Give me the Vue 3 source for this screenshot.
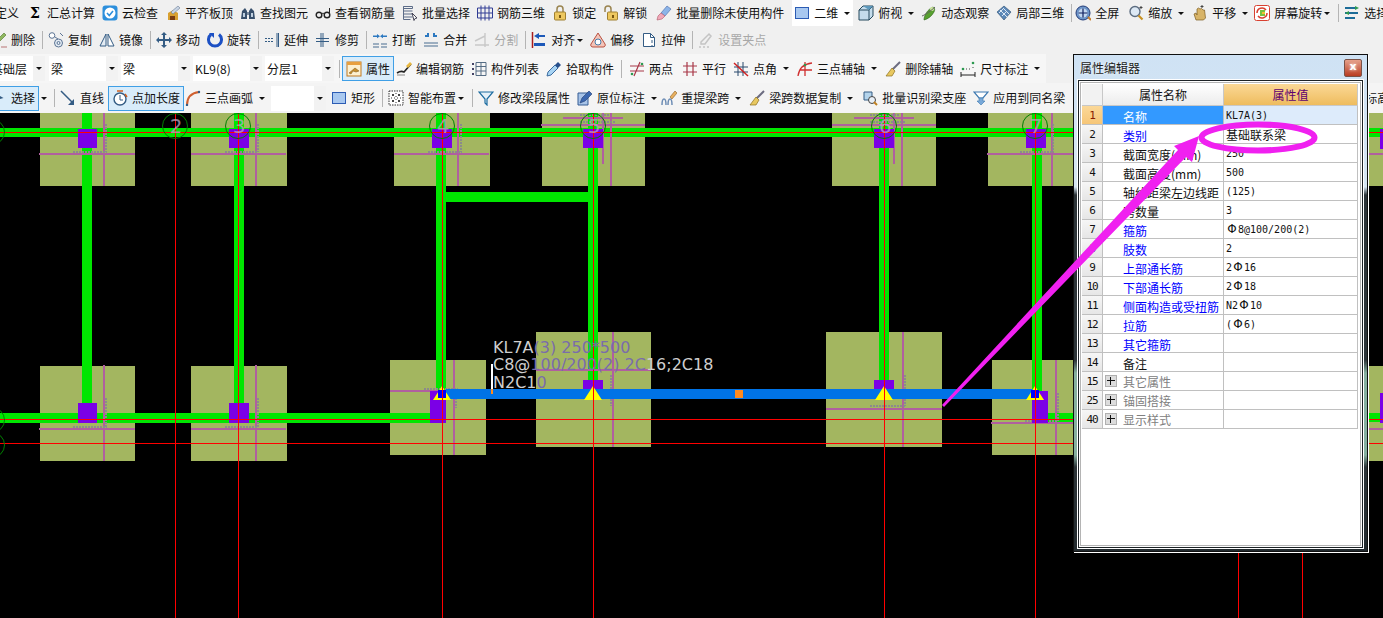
<script setup>
const icons = {
  sum: '<text x="8" y="13" font-size="14" font-weight="700" text-anchor="middle" font-family="DejaVu Serif">Σ</text>',
  cloud: '<rect x="0.5" y="0.5" width="15" height="15" rx="3" fill="#2c8fdc"/><circle cx="8" cy="8" r="5.5" fill="#fff"/><path d="M5 8l2.3 2.5L11 6" fill="none" stroke="#2c8fdc" stroke-width="1.6"/>',
  level: '<path d="M3 15V8l5-3 5 3v7z" fill="#d8a030"/><path d="M5 11h5v4H5z" fill="#7a3c10"/><path d="M6 7l7-6 2 2-7 6z" fill="#c8d4e4" stroke="#6a7c94" stroke-width=".6"/>',
  find: '<path d="M1 14l1-8 3-3 2 3v8zM9 14V6l2-3 3 3 1 8z" fill="#38506c"/><path d="M3 8h2v4H3zM11 8h2v4h-2z" fill="#c0d0e0"/><path d="M7 7h2v3H7z" fill="#7c8ca0"/>',
  glass: '<circle cx="4" cy="10" r="2.8" fill="none" stroke="#222" stroke-width="1.4"/><circle cx="12" cy="10" r="2.8" fill="none" stroke="#222" stroke-width="1.4"/><path d="M6.5 9C7.5 8 8.5 8 9.5 9M14.500 9V3" fill="none" stroke="#222"/>',
  batch: '<path d="M1.500 1.500h9v2h-9zM1.500 6h9M1.500 9h9M1.500 12h9M1.500 1.500v13h7" fill="none" stroke="#5c6c88"/><path d="M10 8l5 5-2 .5-1 2z" fill="#fff" stroke="#445"/>',
  steel: '<path d="M.5 3h15v10H.5zM4 .5v15M8 .5v15M12 .5v15M.5 8h15" fill="none" stroke="#303c94"/>',
  lock: '<path d="M5 7V4a3 3 0 016 0v3" fill="none" stroke="#9a8450" stroke-width="1.500"/><rect x="2.500" y="7" width="11" height="8" rx="1" fill="#eec860" stroke="#a08030"/><path d="M7 10h2v3H7z" fill="#7a5810"/>',
  unlock: '<path d="M2 7V4a3 3 0 016 0v3" fill="none" stroke="#9a8450" stroke-width="1.500"/><rect x="4.500" y="7" width="10" height="8" rx="1" fill="#eec860" stroke="#a08030"/><path d="M9 10h2v3H9z" fill="#7a5810"/>',
  erase: '<path d="M11 1l4 3-6 7-4-3z" fill="#8cb4e8" stroke="#4468a8" stroke-width=".6"/><path d="M5 8l4 3-3 3-5 1 1-4z" fill="#f0a8b8" stroke="#b05868" stroke-width=".6"/>',
  two: '<rect x="1.500" y="2.500" width="13" height="11" fill="#a8c8f0" stroke="#2c5cb4"/>',
  box3d: '<path d="M1 5l4-4h10v10l-4 4H1z" fill="#c4dcec" stroke="#24485c"/><path d="M1 5h10v10M11 5l4-4" fill="none" stroke="#24485c"/><path d="M5 1l6 4 4-4z" fill="#5c98bc"/>',
  orbit: '<path d="M3 15c0-5 4-11 9-13 2 1 2 3 1 5-2 4-6 7-10 8z" fill="#58a030" stroke="#2c6418" stroke-width=".6"/><circle cx="11" cy="4" r="2" fill="#d0e8a0"/><path d="M1 11c3-1 10-6 13-9" fill="none" stroke="#606060"/>',
  local: '<path d="M8 1l7 6-7 8-7-8z" fill="#5c88b8" stroke="#24486c" stroke-width=".6"/><path d="M4 5l7 7M7 3l6 6M3 8l5-5M6 11l5-5" stroke="#dce8f4" fill="none"/>',
  full: '<circle cx="8" cy="8" r="7" fill="#6c94c8" stroke="#243c78"/><circle cx="8" cy="8" r="4.500" fill="#c4d8f0"/><path d="M8 3.500v9M3.500 8h9" stroke="#102060" stroke-width="1.200"/><path d="M13 12l3 3" stroke="#c88030" stroke-width="2"/>',
  zoom: '<circle cx="7" cy="6.500" r="5" fill="#dce8f4" stroke="#5c6c80" stroke-width="1.400"/><path d="M10.500 10.500l4 4" stroke="#c89020" stroke-width="2.200"/><path d="M13 1v3M11.500 2.500h3" stroke="#444"/>',
  hand: '<path d="M4 15l-2-6 2-1 1 2V4l1.500-1L8 4l1.500-.5L11 5l1.500 0 1 8-2 2z" fill="#d8b468" stroke="#7c5c20" stroke-width=".7"/><path d="M10 0v3M8.500 1.500h3" stroke="#444"/>',
  rot: '<rect x=".5" y=".5" width="15" height="15" rx="2" fill="#fff" stroke="#d84030"/><path d="M3 8a5 5 0 019-3M13 8a5 5 0 01-9 3" fill="none" stroke="#d84030" stroke-width="1.500"/><rect x="6" y="5" width="5" height="6" fill="#78c040"/><rect x="8" y="7" width="3" height="2" fill="#f0c030"/>',
  pick: '<path d="M1 3h10M1 8h13M1 13h10" stroke="#1c6c98" stroke-width="2"/><path d="M11 1l4 2-4 2zM5 6l-4 2 4 2z" fill="#2c9a50"/>',
  del: '<path d="M13 1l2 2-7 7-2-2z" fill="#8fb860" stroke="#4c7424" stroke-width=".6"/><path d="M6 8l2 2-3 4-3 1 1-3zM10 15h6" fill="#e0a0a0" stroke="#a04040" stroke-width=".7"/>',
  copy: '<circle cx="4" cy="3.500" r="2.800" fill="#fff" stroke="#5c7494"/><circle cx="10.500" cy="11" r="4" fill="#e4ecf4" stroke="#5c7494"/><path d="M7 5l3 2M12 1l3 3" stroke="#5c7494"/><circle cx="10.500" cy="11" r="1.500" fill="none" stroke="#5c7494"/>',
  mirror: '<path d="M7 2L1 14h6z" fill="#e4ecf4" stroke="#345c84"/><path d="M9 2l6 12H9z" fill="#fff" stroke="#345c84"/>',
  move: '<path d="M8 0l3 3H9v4h4V5l3 3-3 3v-2H9v4h2l-3 3-3-3h2V9H3v2L0 8l3-3v2h4V3H5z" fill="#345c84"/>',
  rotate: '<path d="M4 2.500A6.500 6.500 0 1012 2.500" fill="none" stroke="#1c50c4" stroke-width="3"/><path d="M2 1h5v5z" fill="#1c50c4"/>',
  extend: '<path d="M1 6.500h8M1 9.500h8" stroke="#345c84" stroke-dasharray="2 1"/><path d="M13 1v14M14.500 1v14" stroke="#345c84"/>',
  trim: '<path d="M1 6.500h13M1 9.500h13" stroke="#345c84"/><path d="M6 1v14M8 1v14" stroke="#345c84"/>',
  brk: '<path d="M1 12h6M9 12h6M1 15h6M9 15h6" stroke="#486c90" stroke-width="1.200"/><path d="M1 5h4V3l3 3-3 3V7H1zM15 5h-4V3L8 6l3 3V7h4z" fill="#2c78c0" transform="scale(1 .7)"/>',
  merge: '<path d="M1 11h14M1 14h14" stroke="#486c90" stroke-width="1.200"/><path d="M5 1v3H2M11 1v3h3" stroke="#2c78c0" stroke-width="2" fill="none"/>',
  split: '<path d="M1 13h14M1 9l10-5M11 1v14" stroke="#c8c8c8" stroke-width="1.400" fill="none"/>',
  align: '<path d="M1.500 0v16" stroke="#a81c1c" stroke-width="1.500"/><path d="M3 4l5-3v2h6v2H8v2zM3 11h11v3H3z" fill="#1c58b8"/>',
  offset: '<path d="M8 1l7 11a2 2 0 01-2 3H3a2 2 0 01-2-3z" fill="#f4c4b8" stroke="#b85040"/><circle cx="8" cy="10" r="3" fill="#fff" stroke="#487ca8"/>',
  stretch: '<path d="M2.500 1.500h7l4 4v9h-11z" fill="#fff" stroke="#345c84"/><path d="M9.500 1.500v4h4M11 8v3M11 13v1" fill="none" stroke="#345c84"/>',
  grip: '<path d="M1 15h2M5 15h2M9 15h2M3 10l8-8 2 2-6 8-4 0z" fill="none" stroke="#c4c4c4" stroke-width="1.500"/>',
  prop: '<rect x="1" y="1" width="14" height="14" fill="#fdf0d0" stroke="#c07820"/><path d="M1 1h14v3H1z" fill="#e8a040"/><path d="M3 12l6-5 4 3-3 1-3-1-2 3z" fill="#c89030" stroke="#785010" stroke-width=".5"/>',
  editbar: '<path d="M1 12c3-2 5-2 7-1l7-8" fill="none" stroke="#222" stroke-width="1.600"/><path d="M10 5l4-4 2 2-4 4z" fill="#e8b840"/><path d="M1 14h8" stroke="#888"/>',
  list: '<path d="M1 2h2v2H1zM1 7h2v2H1zM1 12h2v2H1z" fill="#446"/><path d="M5 1.500h10v13H5zM5 5.500h10M5 10h10M10 1.500v13" fill="none" stroke="#556c84"/>',
  dropper: '<path d="M1 15l1-4 7-7 3 3-7 7z" fill="#a8d4f4" stroke="#3c6ca0"/><path d="M9 4l3-3 3 3-3 3z" fill="#28508c"/>',
  twopt: '<path d="M11 1L5 15M1 5h14M1 10h14" stroke="#a83848" fill="none" stroke-width="1.200"/><circle cx="3" cy="13" r="1.300" fill="#2c9a50"/><circle cx="13" cy="3" r="1.300" fill="#2c9a50"/>',
  para: '<path d="M5 1v14M11 1v14M1 5h14M1 11h14" stroke="#a83848" fill="none" stroke-width="1.200"/>',
  angle: '<path d="M5 1v14M10 1v14M1 6h14M1 11h14" stroke="#28486c" fill="none"/><path d="M1 2l14 13" stroke="#d02020" stroke-width="1.500"/>',
  arc3: '<path d="M1 15C2 7 6 3 15 2M8 1v14M3 9h12" fill="none" stroke="#d03030" stroke-width="1.300"/><circle cx="8" cy="4" r="1.300" fill="#2c9a50"/>',
  broom: '<path d="M15 1L7 9" stroke="#6c6c80" stroke-width="2"/><path d="M7 7l3 3-3 5-6 0z" fill="#e8c860" stroke="#8c7020" stroke-width=".7"/>',
  dim: '<path d="M1 14h14M1 11v5M15 11v5" stroke="#222" fill="none"/><circle cx="3" cy="8" r="1.300" fill="#2c9a50"/><circle cx="13" cy="2" r="1.300" fill="#2c9a50"/><path d="M6 8h1M9 8h1M13 6v1" stroke="#444"/>',
  sel: '<path d="M2 2l5 11 1.500-4 4-1z" fill="#345c84"/>',
  linei: '<path d="M1 1l12 12" stroke="#345c84" stroke-width="1.500"/><path d="M14 15H8l6-6z" fill="#345c84"/>',
  ptlen: '<circle cx="8" cy="9" r="6" fill="#fff" stroke="#345c84" stroke-width="1.400"/><path d="M8 5v5h3" stroke="#345c84" fill="none"/><path d="M5 1h6M13 4l2 3" stroke="#d06020" stroke-width="1.500"/>',
  arc: '<path d="M2 15C2 8 6 3 14 2" fill="none" stroke="#d06030" stroke-width="2"/><circle cx="2" cy="15" r="1.200" fill="#345c84"/><circle cx="14" cy="2" r="1.200" fill="#345c84"/>',
  smart: '<rect x="1" y="1" width="14" height="14" fill="#fff" stroke="#333" stroke-dasharray="1.500 1"/><path d="M8 3v10M3 8h10" stroke="#333" stroke-dasharray="1 2"/><path d="M4 4h2v2H4zM10 4h2v2h-2zM4 10h2v2H4zM10 10h2v2h-2z" fill="#444"/>',
  segp: '<path d="M1 2h14L9 9v6L7 13V9z" fill="#e4f0f8" stroke="#1c6ca0" stroke-width="1.200"/>',
  inplace: '<path d="M1 3h10v12H1z" fill="#a8c4e8" stroke="#345c94"/><path d="M3 13l2-5 7-7 3 3-7 7z" fill="#3c68b0" stroke="#203c70" stroke-width=".6"/>',
  respan: '<path d="M1 15c0-8 4-8 4 0M7 15c0-8 4-8 4 0" fill="none" stroke="#6c8cb4" stroke-width="1.500"/><path d="M9 7l5-6 2 2-5 6z" fill="#e8b060" stroke="#8c6020" stroke-width=".6"/>',
  recog: '<path d="M2 2h8v8H2z" fill="#b4d4ec" stroke="#345c84"/><circle cx="10" cy="10" r="3.500" fill="#e8f0f8" stroke="#444"/><path d="M12 12l3 3" stroke="#c08020" stroke-width="2"/>',
  apply: '<path d="M1 2h14l-5 6h-4z" fill="#fff" stroke="#3c78b0" stroke-width="1.200"/><path d="M6 8h4v3h2l-4 4-4-4h2z" fill="#78a8d8" stroke="#3c78b0" stroke-width=".6"/>',
}

const toolbar = [
  { name: 'r1', items: [
    { t: '定义', g: -5 - 7 }, { i: 'sum', t: '汇总计算', g: 1 },
    { i: 'cloud', t: '云检查' }, { i: 'level', t: '平齐板顶' }, { i: 'find', t: '查找图元' },
    { i: 'glass', t: '查看钢筋量' }, { i: 'batch', t: '批量选择' }, { i: 'steel', t: '钢筋三维' },
    { i: 'lock', t: '锁定' }, { i: 'unlock', t: '解锁' }, { i: 'erase', t: '批量删除未使用构件', g: 2 },
    { i: 'two', t: '二维', a: 1, g: 1, white: 1 }, { i: 'box3d', t: '俯视', a: 1, g: -2 },
    { i: 'orbit', t: '动态观察', g: -1 }, { i: 'local', t: '局部三维' }, { s: 1 },
    { i: 'full', t: '全屏', g: -2 }, { i: 'zoom', t: '缩放', a: 1, g: 2 }, { i: 'hand', t: '平移', a: 1 },
    { i: 'rot', t: '屏幕旋转', a: 2, g: -2 }, { s: 1 }, { i: 'pick', t: '选择' },
  ] },
  { name: 'r2', items: [
    { i: 'del', t: '删除', g: -16 }, { s: 1 }, { i: 'copy', t: '复制' }, { i: 'mirror', t: '镜像' }, { s: 1 },
    { i: 'move', t: '移动' }, { i: 'rotate', t: '旋转' }, { s: 1 }, { i: 'extend', t: '延伸' }, { i: 'trim', t: '修剪' }, { s: 1 },
    { i: 'brk', t: '打断' }, { i: 'merge', t: '合并' }, { i: 'split', t: '分割', d: 1 }, { s: 1 },
    { i: 'align', t: '对齐', a: 2 }, { i: 'offset', t: '偏移', g: -1 }, { i: 'stretch', t: '拉伸' }, { s: 1 },
    { i: 'grip', t: '设置夹点', d: 1 },
  ] },
  { name: 'r3', items: [
    { c: '基础层', w: 56, g: -18 }, { c: '梁', w: 69, g: -3 }, { c: '梁', w: 69, g: -4 },
    { c: 'KL9(8)', w: 69, g: -4 }, { c: '分层1', w: 69, g: -4 }, { s: 1, g: -2 },
    { i: 'prop', t: '属性', on: 1, g: -3 }, { i: 'editbar', t: '编辑钢筋', g: -5 }, { i: 'list', t: '构件列表' },
    { i: 'dropper', t: '拾取构件' }, { s: 1 }, { i: 'twopt', t: '两点', g: 2 }, { i: 'para', t: '平行', g: 2 },
    { i: 'angle', t: '点角', a: 1 }, { i: 'arc3', t: '三点辅轴', a: 1 }, { i: 'broom', t: '删除辅轴' },
    { i: 'dim', t: '尺寸标注', a: 1 },
  ] },
  { name: 'r4', items: [
    { i: 'sel', t: '选择', on: 1, a: 2, g: -20 }, { s: 1, g: -1 }, { i: 'linei', t: '直线' },
    { i: 'ptlen', t: '点加长度', on: 1, g: -3 }, { i: 'arc', t: '三点画弧', a: 1, g: -6 },
    { c: '', w: 55, g: -2 }, { i: 'two', t: '矩形', g: -2 }, { s: 1 }, { i: 'smart', t: '智能布置', a: 2 }, { s: 1 },
    { i: 'segp', t: '修改梁段属性' }, { i: 'inplace', t: '原位标注', a: 1 }, { i: 'respan', t: '重提梁跨', a: 1, g: -4 },
    { i: 'broom', t: '梁跨数据复制', a: 1 }, { i: 'recog', t: '批量识别梁支座', g: 1 }, { i: 'apply', t: '应用到同名梁' },
    { t: '标高', g: 293 },
  ] },
]

const pads = [
  [40, 113, 95, 73], [191, 113, 96, 73], [394, 113, 96, 73], [542, 113, 103, 73], [832, 113, 104, 73], [988, 113, 92, 73], [1368, 113, 15, 73],
  [40, 366, 95, 95], [191, 366, 96, 95], [390, 360, 96, 95], [536, 332, 115, 115], [826, 332, 116, 115], [992, 360, 88, 95], [1369, 366, 14, 95],
]
const green = [
  [0, 128, 1383, 9], [82, 113, 10, 310], [234, 113, 10, 310], [436, 113, 10, 280], [588, 113, 10, 275], [879, 113, 10, 275], [1032, 113, 10, 280],
  [446, 192, 142, 10], [0, 413, 432, 10], [1046, 413, 337, 9],
]
const purple = [
  [78, 129, 19, 19], [229, 129, 20, 19], [432, 129, 20, 19], [583, 129, 20, 19], [874, 129, 20, 19], [1026, 129, 20, 19],
  [78, 403, 19, 20], [229, 403, 20, 20], [430, 391, 16, 32], [583, 380, 20, 10], [874, 380, 20, 10], [1032, 391, 16, 32],
  [1380, 129, 3, 20], [1380, 393, 3, 30],
]
// x1 y1 x2 y2
const mauve = [
  [104, 113, 104, 186], [39, 154, 135, 154], [256, 113, 256, 186], [191, 154, 286, 154], [458, 113, 458, 186], [394, 154, 489, 154],
  [611, 113, 611, 186], [603, 113, 603, 164], [541, 125, 645, 125], [563, 118, 623, 118],
  [902, 113, 902, 186], [894, 113, 894, 164], [832, 125, 936, 125], [854, 118, 914, 118], [1052, 113, 1052, 186], [987, 154, 1075, 154],
  [104, 365, 104, 461], [39, 429, 135, 429], [256, 365, 256, 461], [191, 429, 286, 429], [454, 360, 454, 455], [390, 391, 485, 391],
  [613, 332, 613, 447], [536, 370, 651, 370], [903, 332, 903, 447], [826, 409, 942, 409], [1056, 360, 1056, 455], [991, 423, 1080, 423],
  [1368, 154, 1383, 154], [1368, 429, 1383, 429],
]
// tiny unreadable labels beside the mauve lines
const smudges = [
  [73, 152, 107, 152], [106, 124, 106, 152], [225, 152, 258, 152], [258, 124, 258, 152], [428, 152, 462, 152], [461, 124, 461, 152],
  [73, 427, 107, 427], [106, 398, 106, 427], [225, 427, 258, 427], [258, 398, 258, 427], [424, 389, 458, 389], [456, 392, 456, 408],
  [611, 375, 611, 406], [870, 406, 905, 406], [905, 375, 905, 406], [1025, 421, 1058, 421], [1058, 393, 1058, 421], [1020, 152, 1054, 152], [1053, 124, 1053, 152],
  [580, 115, 610, 115], [580, 122, 615, 122], [870, 115, 900, 115], [870, 122, 905, 122],
]
const redV = [175, 238, 442, 593, 884, 1035, 1238, 1302]
const axes = [[175, 126, '2'], [238, 126, '3'], [442, 126, '4'], [593, 126, '5'], [884, 126, '6'], [1035, 126, '7']]
const triangles = [[593, false], [884, false], [442, true], [1035, true]]

const rows = [
  { n: 1, name: '名称', v: 'KL7A(3)', sel: true },
  { n: 2, name: '类别', v: '基础联系梁', blue: true },
  { n: 3, name: '截面宽度(mm)', v: '250' },
  { n: 4, name: '截面高度(mm)', v: '500' },
  { n: 5, name: '轴线距梁左边线距', v: '(125)' },
  { n: 6, name: '跨数量', v: '3' },
  { n: 7, name: '箍筋', v: 'Φ8@100/200(2)', blue: true },
  { n: 8, name: '肢数', v: '2', blue: true },
  { n: 9, name: '上部通长筋', v: '2Φ16', blue: true },
  { n: 10, name: '下部通长筋', v: '2Φ18', blue: true },
  { n: 11, name: '侧面构造或受扭筋', v: 'N2Φ10', blue: true },
  { n: 12, name: '拉筋', v: '(Φ6)', blue: true },
  { n: 13, name: '其它箍筋', v: '', blue: true },
  { n: 14, name: '备注', v: '' },
  { n: 15, name: '其它属性', v: '', group: true },
  { n: 25, name: '锚固搭接', v: '', group: true },
  { n: 40, name: '显示样式', v: '', group: true },
]
</script>

<template>
  <div class="page">
    <div class="toolbar">
      <div v-for="row in toolbar" :key="row.name" class="row" :class="row.name">
        <template v-for="(it, idx) in row.items" :key="idx">
          <span v-if="it.s" class="sep" :style="{ marginLeft: 7 + (it.g || 0) + 'px' }"></span>
          <span v-else-if="it.c !== undefined" class="combo" :style="{ width: it.w + 'px', marginLeft: 7 + (it.g || 0) + 'px' }">
            <span class="combo-text">{{ it.c }}</span><span class="combo-arrow"></span>
          </span>
          <span v-else class="item" :class="{ on: it.on, white: it.white, off: it.d }" :style="{ marginLeft: 7 + (it.g || 0) + 'px' }">
            <svg v-if="it.i" class="ico" viewBox="0 0 16 16" v-html="icons[it.i]"></svg>
            <span class="label">{{ it.t }}</span>
            <span v-if="it.a && it.white" class="arrow"></span>
          </span>
          <span v-if="it.a && !it.white" class="arrow" :class="{ tight: it.a === 2 }"></span>
        </template>
      </div>
    </div>

    <svg class="canvas" viewBox="0 113 1383 505" width="1383" height="505">
      <rect v-for="(p, i) in pads" :key="'p' + i" :x="p[0]" :y="p[1]" :width="p[2]" :height="p[3]" fill="#a3b660" />
      <rect v-for="(g, i) in green" :key="'g' + i" :x="g[0]" :y="g[1]" :width="g[2]" :height="g[3]" fill="#00e600" />
      <line v-for="(m, i) in mauve" :key="'m' + i" :x1="m[0]" :y1="m[1]" :x2="m[2]" :y2="m[3]" stroke="#b05f9f" stroke-width="2" />
      <line v-for="(m, i) in smudges" :key="'s' + i" :x1="m[0]" :y1="m[1]" :x2="m[2]" :y2="m[3]" stroke="#8b8b8b" stroke-width="2" stroke-dasharray="2 1" />
      <rect v-for="(p, i) in purple" :key="'v' + i" :x="p[0]" :y="p[1]" :width="p[2]" :height="p[3]" fill="#7b00e6" />
      <rect x="446" y="389" width="588" height="10" fill="#0073e6" />
      <rect x="735" y="390" width="8" height="8" fill="#ff8a1e" />
      <g v-for="t in triangles" :key="t[0]">
        <polygon :points="`${t[0]},386 ${t[0] + 9},400 ${t[0] - 9},400`" fill="#ffff00" />
        <rect v-if="t[1]" :x="t[0] - 4" y="390" width="8" height="8" fill="#0000ff" />
      </g>
      <line v-for="x in redV" :key="x" :x1="x + 0.5" y1="113" :x2="x + 0.5" y2="618" stroke="#ff0000" />
      <line x1="0" y1="132.500" x2="1383" y2="132.500" stroke="#ff0000" />
      <line x1="0" y1="419.500" x2="1383" y2="419.500" stroke="#ff0000" />
      <line x1="0" y1="443.500" x2="1383" y2="443.500" stroke="#ff0000" />
      <g v-for="a in axes" :key="a[2]">
        <circle :cx="a[0]" :cy="a[1]" r="12.500" fill="none" stroke="#008000" />
        <text :x="a[0] + 1" :y="a[1] + 7" class="axis-no" text-anchor="middle">{{ a[2] }}</text>
      </g>
      <circle cx="-8" cy="132" r="12.500" fill="none" stroke="#008000" />
      <circle cx="-8" cy="420" r="12.500" fill="none" stroke="#008000" />
      <circle cx="-8" cy="445" r="12.500" fill="none" stroke="#008000" />
      <text class="beam-text" x="493" y="353">KL7A<tspan class="dim">(3) 250*500</tspan></text>
      <text class="beam-text" x="493" y="370">C8@<tspan class="dim">100/200(2) 2C</tspan>16;2C18</text>
      <text class="beam-text" x="493" y="388">N2C1<tspan class="dim">0</tspan></text>
      <rect x="491" y="364" width="2" height="25" fill="#fff" />
      <rect x="491" y="389" width="2" height="5" fill="#ff8a1e" />
    </svg>

    <div class="dlg">
      <div class="dlg-title">
        <span>属性编辑器</span>
        <span class="close">x</span>
      </div>
      <div class="dlg-body">
        <div class="frame">
          <div class="grid">
            <div class="hd corner"></div>
            <div class="hd hd-name">属性名称</div>
            <div class="hd hd-val">属性值</div>
            <template v-for="r in rows" :key="r.n">
              <div class="no" :class="{ sel: r.sel }">{{ r.n }}</div>
              <div class="name" :class="{ sel: r.sel, blue: r.blue, group: r.group }">
                <span v-if="r.group" class="plus"></span>{{ r.name }}
              </div>
              <div class="val" :class="{ sel: r.sel, cjk: r.n === 2 }">
                <template v-for="(p, i) in r.v.split('Φ')" :key="i"><span v-if="i" class="bar">Φ</span>{{ p }}</template>
              </div>
            </template>
          </div>
        </div>
      </div>
    </div>

    <svg class="marks" viewBox="0 0 1383 618" width="1383" height="618">
      <ellipse cx="1258" cy="137.500" rx="56.500" ry="13" fill="none" stroke="#f020f0" stroke-width="6" />
      <polygon points="942,405 1178,150 1174,146 1199,136 1192,162 1186,157 944,407" fill="#f020f0" />
    </svg>
  </div>
</template>

<style scoped>
.page {
  position: relative;
  width: 1383px;
  height: 618px;
  overflow: hidden;
  background: #000;
  font-family: "Noto Sans CJK SC", "Liberation Sans", sans-serif;
  font-size: 12px;
  color: #111;
}
.toolbar {
  height: 113px;
  background: #f0f0f0;
}
.row {
  display: flex;
  align-items: center;
  height: 29px;
  white-space: nowrap;
  overflow: hidden;
}
.r1 {
  height: 26px;
}
.r2 {
  height: 28px;
}
.r3 {
  background: linear-gradient(90deg, #f6f6f6 1046px, #f0f0f0 1046px);
}
.r4 {
  height: 30px;
  background: #f4f4f4;
}
.item {
  display: flex;
  align-items: center;
  flex: none;
  gap: 4px;
  height: 25px;
}
.item.on {
  box-sizing: border-box;
  padding: 0 3px;
  border: 1px solid #3f9fe6;
  background: #d9ecfa;
}
.item.white {
  padding: 0 2px;
  background: #fff;
  height: 27px;
}
.item.off {
  color: #a8a8a8;
}
.ico {
  flex: none;
  width: 16px;
  height: 16px;
}
.label {
  line-height: 16px;
}
.arrow {
  flex: none;
  width: 9px;
  margin-left: 4px;
  height: 3px;
  position: relative;
}
.item .arrow {
  margin-left: 0;
}
.arrow.tight {
  margin-left: 0;
}
.arrow::after {
  content: "";
  position: absolute;
  left: 2px;
  top: 0;
  border: 3px solid transparent;
  border-top-color: #111;
  border-bottom: 0;
}
.sep {
  flex: none;
  width: 1px;
  height: 18px;
  margin-right: -2px;
  background: #b4b4b4;
}
.combo {
  display: flex;
  align-items: center;
  flex: none;
  box-sizing: border-box;
  height: 25px;
  background: #fff;
  overflow: hidden;
}
.combo-text {
  flex: 1;
  padding-left: 2px;
  white-space: nowrap;
}
.combo-arrow {
  position: relative;
  flex: none;
  width: 12px;
  height: 100%;
  background: #f2f2f2;
}
.combo-arrow::after {
  content: "";
  position: absolute;
  left: 3px;
  top: 11px;
  border: 3px solid transparent;
  border-top-color: #111;
  border-bottom: 0;
}
.canvas {
  display: block;
}
.axis-no {
  font-family: "DejaVu Sans", sans-serif;
  font-size: 20px;
  fill: #b8a4c4;
  opacity: 0.75;
}
.beam-text {
  font-family: "DejaVu Sans", sans-serif;
  font-size: 16px;
  fill: #cfcfcf;
}
.dim {
  fill: #7a6cab;
}
.dlg {
  position: absolute;
  left: 1073px;
  top: 54px;
  box-sizing: border-box;
  width: 295px;
  height: 498px;
  padding: 0 4px 3px;
  border: 1px solid #101010;
  box-shadow: 1px 1px 0 #fff;
  background: linear-gradient(#cfe2f4 0, #d6e6f2 132px, #2c3438 140px, #2c3438 305px, #86b0a0 318px, #86b0a0 400px, #2c3438 412px, #222a2e 100%);
}
.dlg-title {
  display: flex;
  align-items: center;
  justify-content: space-between;
  height: 25px;
  padding: 0 1px 0 2px;
  color: #1a1a1a;
  text-shadow: 0 0 3px #fff;
}
.close {
  box-sizing: border-box;
  width: 18px;
  height: 18px;
  border: 1px solid #7a5248;
  border-radius: 2px;
  background: linear-gradient(#e6a08a, #b83c22);
  color: #fff;
  font-family: "DejaVu Sans", sans-serif;
  font-size: 11px;
  font-weight: 700;
  line-height: 14px;
  text-align: center;
}
.dlg-body {
  box-sizing: border-box;
  height: 468px;
  padding: 1px;
  border: 1px solid #1c2226;
  background: #fff;
  box-shadow: 0 0 0 1px #fff;
}
.frame {
  box-sizing: border-box;
  height: 100%;
  padding: 1px 2px 0 1px;
  border: 1px solid #b4b4b4;
  background: #fff;
}
.grid {
  display: grid;
  grid-template-columns: 21px 121px 134px;
  grid-template-rows: 22px;
  grid-auto-rows: 19px;
}
.hd {
  box-sizing: border-box;
  line-height: 21px;
  text-align: center;
  border-right: 1px solid #c8c8c8;
  border-bottom: 1px solid #c8c8c8;
}
.corner {
  background: #f2f2f2;
}
.hd-name {
  background: linear-gradient(#fff, #ececec);
}
.hd-val {
  background: linear-gradient(#fbd896, #eebc5e);
  color: #5e0070;
}
.no, .name, .val {
  box-sizing: border-box;
  height: 19px;
  line-height: 20px;
  border-right: 1px solid #c0c0c0;
  border-bottom: 1px solid #c0c0c0;
  white-space: nowrap;
  overflow: hidden;
}
.no {
  text-align: center;
  font-family: "DejaVu Sans Mono", monospace;
  font-size: 11px;
  letter-spacing: -1px;
  background: linear-gradient(#f6f6f6, #e6e6e6);
}
.no.sel {
  background: linear-gradient(#fbd898, #f6c678);
  color: #8a1a00;
}
.name {
  padding-left: 20px;
  line-height: 21px;
}
.name.blue {
  color: #0000ff;
}
.name.group {
  display: flex;
  align-items: center;
  padding-left: 2px;
  color: #808080;
}
.name.sel {
  background: #3399ff;
  color: #fff;
}
.plus {
  position: relative;
  flex: none;
  box-sizing: border-box;
  width: 12px;
  height: 12px;
  margin-right: 6px;
  border: 1px solid #b0b0b0;
  background: #dcdcdc;
}
.plus::before, .plus::after {
  content: "";
  position: absolute;
  background: #111;
}
.plus::before {
  left: 1px;
  right: 1px;
  top: 4px;
  height: 1px;
}
.plus::after {
  top: 1px;
  bottom: 1px;
  left: 4px;
  width: 1px;
}
.val {
  padding-left: 2px;
  font-family: "DejaVu Sans Mono", monospace;
  font-size: 10px;
}
.val.sel {
  background: #ddebfb;
}
.val.cjk {
  font-family: "Noto Sans CJK SC", sans-serif;
  font-size: 12px;
}
.bar {
  display: inline-block;
  width: 12px;
  font-family: "DejaVu Sans", sans-serif;
  font-size: 12px;
  line-height: 1;
  text-align: center;
}
.marks {
  position: absolute;
  left: 0;
  top: 0;
}
</style>

<style>
html, body {
  margin: 0;
  overflow: hidden;
  background: #000;
}
</style>
